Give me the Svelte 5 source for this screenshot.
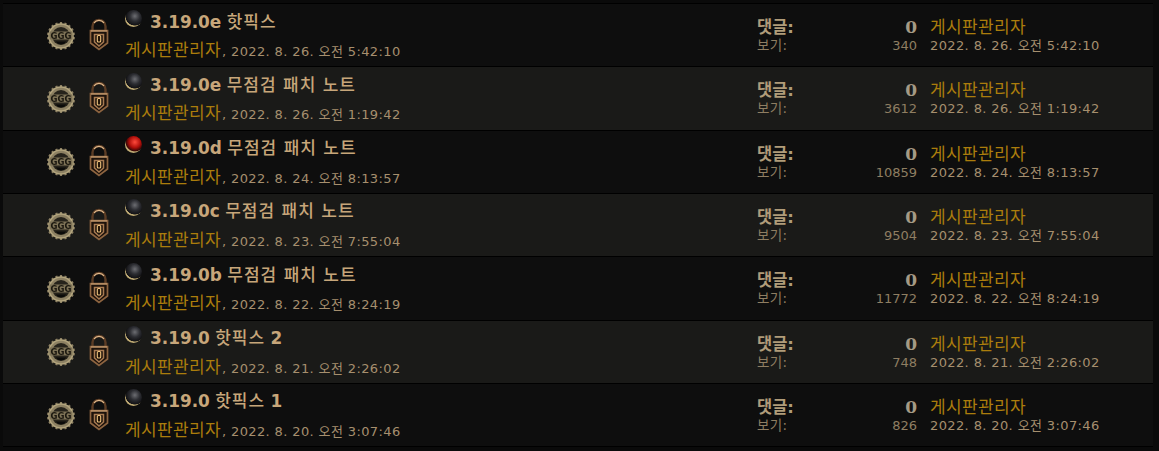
<script>
  const rows = [
    { v: '3.19.0e', t: '핫픽스', d: '2022. 8. 26. 오전 5:42:10', views: 340 },
    { v: '3.19.0e', t: '무점검 패치 노트', d: '2022. 8. 26. 오전 1:19:42', views: 3612 },
    { v: '3.19.0d', t: '무점검 패치 노트', d: '2022. 8. 24. 오전 8:13:57', views: 10859, hot: true },
    { v: '3.19.0c', t: '무점검 패치 노트', d: '2022. 8. 23. 오전 7:55:04', views: 9504 },
    { v: '3.19.0b', t: '무점검 패치 노트', d: '2022. 8. 22. 오전 8:24:19', views: 11772 },
    { v: '3.19.0', t: '핫픽스', n: '2', d: '2022. 8. 21. 오전 2:26:02', views: 748 },
    { v: '3.19.0', t: '핫픽스', n: '1', d: '2022. 8. 20. 오전 3:07:46', views: 826 }
  ];
</script>

<div class="page">
  <div class="list">
    {#each rows as r, i}
      <div class="row" class:alt={i % 2 === 1}>
        <div class="icons">
          <svg class="gear" viewBox="0 0 30 30" width="30" height="30">
            <g fill="#8d8163">
              <circle cx="15" cy="15" r="12" />
              {#each Array(18) as _, k}
                <rect x="13.9" y="1" width="2.2" height="4.500" transform="rotate({k * 20} 15 15)" />
              {/each}
            </g>
            <circle cx="15" cy="15" r="12" fill="none" stroke="#b3a57e" stroke-width="1.600" />
            <circle cx="15" cy="15" r="9" fill="#26231b" />
            <rect x="3.500" y="10.500" width="23" height="8" fill="#7d7256" />
            <text x="15" y="17.800" text-anchor="middle" class="ggg">GGG</text>
            <path d="M9.500 20.500a7 7 0 0 0 11 0z" fill="#0b0b09" />
          </svg>
          <svg class="lock" viewBox="0 0 22 33" width="22" height="33">
            <path d="M4.500 12V8.500a6.500 6.500 0 0 1 13 0V12" fill="none" stroke="#5c3d25" stroke-width="2.400" />
            <path d="M6 4.800a6.500 6.500 0 0 1 10 0" fill="none" stroke="#e0b98c" stroke-width="1.300" />
            <path d="M2.500 12.500h17v12.500L11 31.500l-8.500-6.500z" fill="#1c120b" stroke="#8d6440" stroke-width="1.700" />
            <path d="M3 13h16" stroke="#c99f73" stroke-width="1.300" />
            <path d="M6.500 16.500h9v7.500L11 28l-4.500-4z" fill="none" stroke="#a87b52" stroke-width="1.500" />
            <rect x="9.300" y="17.500" width="3.400" height="6.500" rx="1" fill="#231508" stroke="#efc37e" stroke-width="1.100" />
          </svg>
        </div>
        <div class="main">
          <div class="title">
            <span class="orb" class:hot={r.hot}></span>
            <span><span class="ver">{r.v}</span> <span class="ttl">{r.t}</span>{#if r.n}&nbsp;<span class="ver">{r.n}</span>{/if}</span>
          </div>
          <div class="by"><span class="name">게시판관리자</span><span class="meta">, {r.d}</span></div>
        </div>
        <div class="stats">
          <div class="line big"><span class="lbl">댓글:</span><span class="num">0</span></div>
          <div class="line"><span class="sub">보기:</span><span class="count">{r.views}</span></div>
        </div>
        <div class="last">
          <div class="name">게시판관리자</div>
          <div class="meta">{r.d}</div>
        </div>
      </div>
    {/each}
  </div>
</div>

<style>
  :global(body) {
    margin: 0;
    background: #0a0a0a;
  }
  .page {
    width: 1159px;
    height: 451px;
    overflow: hidden;
    padding: 3px 6px 0 3px;
    box-sizing: border-box;
    font-family: "Liberation Sans", "Noto Sans CJK KR", sans-serif;
  }
  .list {
    border-top: 1px solid #000;
  }
  .row {
    height: 62.33px;
    border-bottom: 1px solid #000;
    background: #0e0e0e;
    display: flex;
  }
  .row.alt {
    background: #1a1a18;
  }
  .icons {
    width: 116px;
    flex: none;
    display: flex;
    padding-left: 43px;
    box-sizing: border-box;
    align-items: center;
    gap: 12px;
    padding-top: 1px;
  }
  .gear {
    flex: none;
    filter: blur(0.4px);
  }
  .ggg {
    font-family: "DejaVu Sans", sans-serif;
    font-size: 8.5px;
    font-weight: 700;
    fill: #1a170f;
  }
  .lock {
    flex: none;
    margin-top: -3px;
    filter: blur(0.3px);
  }
  .main {
    width: 638px;
    flex: none;
    padding-left: 6px;
    box-sizing: border-box;
  }
  .title {
    height: 32px;
    box-sizing: border-box;
    display: flex;
    align-items: center;
    font-size: 16.9px;
    color: #c7a67a;
    white-space: pre;
    font-family: "DejaVu Sans", "Noto Sans CJK KR", sans-serif;
  }
  .orb {
    width: 17px;
    height: 17px;
    border-radius: 50%;
    margin: -4px 8px 0 0;
    background: radial-gradient(circle at 58% 36%, #6c6d72 0, #2c2d32 34%, #151518 58%, #151518 62%, transparent 66%), linear-gradient(205deg, transparent 40%, #c0ab74 60%);
    flex: none;
  }
  .orb.hot {
    background: radial-gradient(circle at 58% 36%, #ff4a3c 0, #b00f0a 38%, #3a0706 60%, transparent 66%), linear-gradient(205deg, transparent 40%, #c0ab74 60%);
  }
  .ver {
    font-weight: 700;
  }
  .ttl {
    font-weight: 500;
    font-size: 17px;
    letter-spacing: 1px;
  }
  .by {
    white-space: nowrap;
    line-height: 24px;
    padding-top: 1px;
  }
  .name {
    color: #ab7d0c;
    font-size: 17px;
    letter-spacing: 0.35px;
    font-family: "Noto Sans CJK KR", sans-serif;
  }
  .meta {
    color: #a68f6e;
    font-size: 13px;
    letter-spacing: 0.38px;
    font-family: "DejaVu Sans", "Noto Sans CJK KR", sans-serif;
  }
  .by .meta {
    margin-left: 1px;
  }
  .stats {
    width: 163px;
    flex: none;
    padding-top: 10px;
    box-sizing: border-box;
    padding-right: 3px;
  }
  .line {
    display: flex;
    justify-content: space-between;
    align-items: baseline;
    height: 17px;
  }
  .line.big {
    height: 20px;
  }
  .lbl {
    font-size: 16.5px;
    font-weight: 700;
    color: #b09c7a;
    font-family: "DejaVu Sans", "Noto Sans CJK KR", sans-serif;
  }
  .num {
    font-size: 17px;
    font-weight: 700;
    color: #a59a85;
    font-family: "DejaVu Serif", serif;
  }
  .sub {
    font-size: 13.5px;
    letter-spacing: 0.3px;
    color: #8f7e62;
    font-family: "DejaVu Sans", "Noto Sans CJK KR", sans-serif;
  }
  .count {
    font-size: 13px;
    color: #8f7e62;
    font-family: "DejaVu Sans", sans-serif;
  }
  .last {
    padding-left: 10px;
    padding-top: 12px;
    line-height: 20px;
    white-space: nowrap;
  }
</style>
